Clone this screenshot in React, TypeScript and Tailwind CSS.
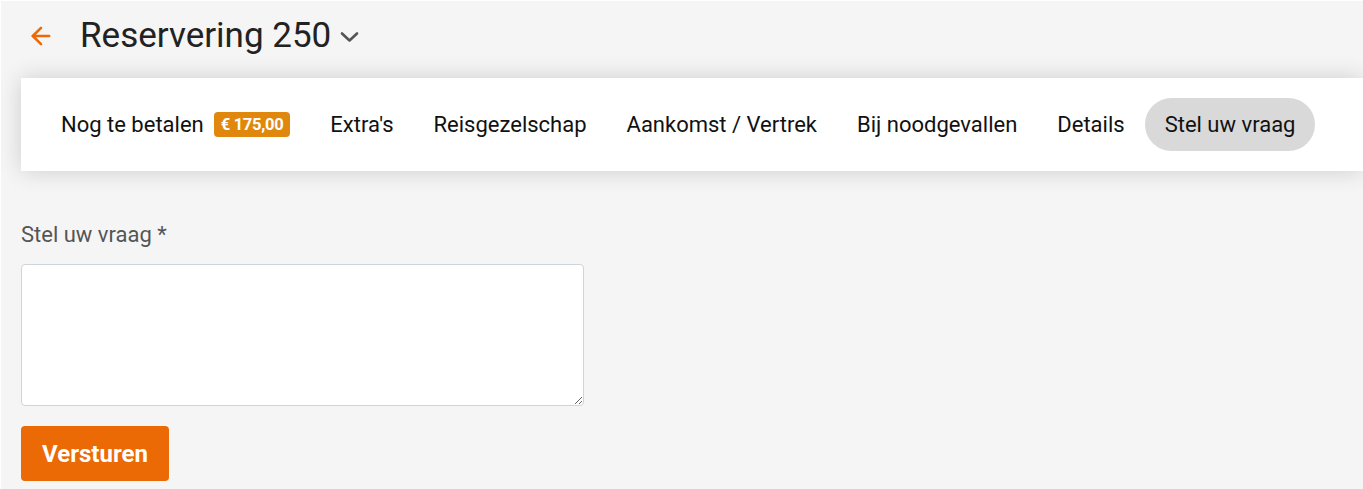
import { ArrowLeft } from "lucide-react";

const tabs = [
  { label: "Nog te betalen", badge: "€ 175,00" },
  { label: "Extra's" },
  { label: "Reisgezelschap" },
  { label: "Aankomst / Vertrek" },
  { label: "Bij noodgevallen" },
  { label: "Details" },
  { label: "Stel uw vraag", active: true },
];

export default function App() {
  return (
    <div
      className="min-h-[489px] w-full overflow-hidden bg-[#f5f5f5] border-l border-t border-white"
      style={{ fontFamily: "Roboto, 'Liberation Sans', sans-serif" }}
    >
      {/* Header */}
      <div className="flex items-center h-[68px] pl-[26px] pt-[1px]">
        <ArrowLeft className="w-[28px] h-[28px] text-[#ec6a06]" strokeWidth={2.2} />
        <h1 className="ml-[25px] text-[35px] leading-none text-[#222]">Reservering 250</h1>
        <svg className="ml-[9px] mt-[2px]" width="19" height="12" viewBox="0 0 19 12" fill="none">
          <path d="M2 2.5 9.5 9.5 17 2.5" stroke="#555" strokeWidth="2.6" strokeLinecap="round" strokeLinejoin="round" />
        </svg>
      </div>

      {/* Tabs */}
      <div className="ml-[20px] mt-[9px] bg-white shadow-[0_0_22px_rgba(0,0,0,0.16)] px-[20px] py-[20px] flex items-center">
        {tabs.map((t) => (
          <div
            key={t.label}
            className={`flex items-center h-[53px] px-[20px] rounded-full text-[22px] text-[#111] whitespace-nowrap ${
              t.active ? "bg-[#d9d9d9]" : ""
            }`}
          >
            {t.label}
            {t.badge && (
              <span className="ml-[10px] bg-[#e0870d] text-white text-[16.5px] font-bold px-[7px] h-[25px] leading-[25px] rounded-[4px] tracking-[-0.3px]">
                {t.badge}
              </span>
            )}
          </div>
        ))}
      </div>

      {/* Form */}
      <div className="pl-[20px] pt-[51px]">
        <label className="block text-[22px] text-[#555] leading-[26px]">Stel uw vraag *</label>
        <textarea className="mt-[16px] block w-[563px] h-[142px] bg-white border border-[#cfd4da] rounded-[4px] resize-y" />
        <button className="mt-[20px] w-[148px] h-[55px] bg-[#ec6a06] text-white text-[24px] font-bold rounded-[4px]">
          Versturen
        </button>
      </div>
    </div>
  );
}
